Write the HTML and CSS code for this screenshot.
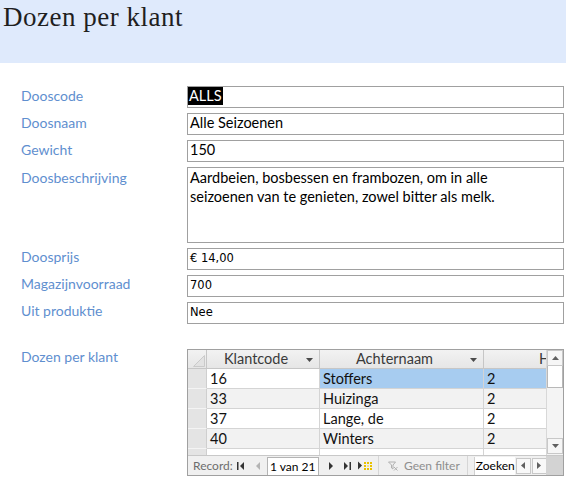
FILE: index.html
```html
<!DOCTYPE html>
<html lang="nl">
<head>
<meta charset="utf-8">
<title>Dozen per klant</title>
<link rel="stylesheet" href="styles.css">
</head>
<body>
<header class="hdr"><h1 class="title">Dozen per klant</h1></header>
<main class="form">
  <label class="lbl">Dooscode</label>
  <div class="fld cal"><span class="sel">ALLS</span></div>
  <label class="lbl">Doosnaam</label>
  <div class="fld cal">Alle Seizoenen</div>
  <label class="lbl">Gewicht</label>
  <div class="fld cal">150</div>
  <label class="lbl">Doosbeschrijving</label>
  <div class="fld cal memo">Aardbeien, bosbessen en frambozen, om in alle<br>seizoenen van te genieten, zowel bitter als melk.</div>
  <label class="lbl">Doosprijs</label>
  <div class="fld tah">€ 14,00</div>
  <label class="lbl">Magazijnvoorraad</label>
  <div class="fld tah">700</div>
  <label class="lbl">Uit produktie</label>
  <div class="fld tah">Nee</div>
  <label class="lbl sublbl">Dozen per klant</label>
  <div class="subform">
    <div class="top">
      <div class="sheet">
        <div class="srow head">
          <div class="c sel-col"><svg class="corner" width="12" height="12" viewBox="0 0 12 12"><path d="M0.5 11.5 L11.5 0.5 L11.5 11.5 Z" fill="#e2e2e2" stroke="#cacaca" stroke-width="1"/></svg></div>
          <div class="c c1 hc"><span class="ht">Klantcode</span><svg class="dd" width="7" height="4" viewBox="0 0 7 4"><path d="M0 0 H7 L3.5 4 Z" fill="#4a4a4a"/></svg></div>
          <div class="c c2 hc"><span class="ht">Achternaam</span><svg class="dd" width="7" height="4" viewBox="0 0 7 4"><path d="M0 0 H7 L3.5 4 Z" fill="#4a4a4a"/></svg></div>
          <div class="c c3 hc h3"><span class="ht">Hoeveelheid</span></div>
        </div>
        <div class="srow r1">
          <div class="c sel-col"></div>
          <div class="c c1 cur">16</div>
          <div class="c c2 hi">Stoffers</div>
          <div class="c c3 hi">2</div>
        </div>
        <div class="srow alt">
          <div class="c sel-col"></div>
          <div class="c c1">33</div>
          <div class="c c2">Huizinga</div>
          <div class="c c3">2</div>
        </div>
        <div class="srow">
          <div class="c sel-col"></div>
          <div class="c c1">37</div>
          <div class="c c2">Lange, de</div>
          <div class="c c3">2</div>
        </div>
        <div class="srow alt">
          <div class="c sel-col"></div>
          <div class="c c1">40</div>
          <div class="c c2">Winters</div>
          <div class="c c3">2</div>
        </div>
        <div class="srow">
          <div class="c sel-col"></div>
          <div class="c c1"></div>
          <div class="c c2"></div>
          <div class="c c3"></div>
        </div>
      </div>
      <div class="vscroll">
        <div class="sbtn"><svg width="7" height="4" viewBox="0 0 7 4"><path d="M0 4 H7 L3.5 0 Z" fill="#606060"/></svg></div>
        <div class="thumb"></div>
        <div class="track"></div>
        <div class="sbtn"><svg width="7" height="4" viewBox="0 0 7 4"><path d="M0 0 H7 L3.5 4 Z" fill="#606060"/></svg></div>
      </div>
    </div>
    <div class="bottom">
      <div class="nav">
        <span class="rec">Record:</span>
        <svg class="ic first" width="7" height="8" viewBox="0 0 7 8"><rect x="0" y="0" width="1.5" height="8" fill="#333"/><path d="M7 0 V8 L3 4 Z" fill="#333"/></svg>
        <svg class="ic prev" width="4" height="8" viewBox="0 0 4 8"><path d="M4 0 V8 L0 4 Z" fill="#b4b4b4"/></svg>
        <div class="recbox">1 van 21</div>
        <svg class="ic next" width="4" height="8" viewBox="0 0 4 8"><path d="M0 0 V8 L4 4 Z" fill="#333"/></svg>
        <svg class="ic last" width="7" height="8" viewBox="0 0 7 8"><path d="M0 0 V8 L4 4 Z" fill="#333"/><rect x="5.5" y="0" width="1.5" height="8" fill="#333"/></svg>
        <svg class="ic new" width="14" height="9" viewBox="0 0 14 9"><path d="M0 0.5 V8.5 L4 4.5 Z" fill="#333"/><g fill="#e9c200"><rect x="6" y="1" width="2" height="2"/><rect x="9" y="1" width="2" height="2"/><rect x="12" y="1" width="2" height="2"/><rect x="6" y="4" width="2" height="2"/><rect x="12" y="4" width="2" height="2"/><rect x="6" y="7" width="2" height="2"/><rect x="9" y="7" width="2" height="2"/><rect x="12" y="7" width="2" height="2"/><rect x="9" y="4" width="2" height="2" fill="#f6e27a"/></g></svg>
        <span class="sep"></span>
        <svg class="ic filt" width="10" height="10" viewBox="0 0 10 10"><path d="M0.5 1 H7.5 L5 4 V8 L3.5 7 V4 Z" fill="none" stroke="#b0b0b0" stroke-width="1"/><path d="M6 6 L9.5 9.5 M9.5 6 L6 9.5" stroke="#b0b0b0" stroke-width="1"/></svg>
        <span class="nofilt">Geen filter</span>
        <span class="sep sep2"></span>
        <div class="search">Zoeken</div>
        <div class="hbtn"><svg width="4" height="7" viewBox="0 0 4 7"><path d="M4 0 V7 L0 3.5 Z" fill="#606060"/></svg></div>
        <div class="hbtn"><svg width="4" height="7" viewBox="0 0 4 7"><path d="M0 0 V7 L4 3.5 Z" fill="#606060"/></svg></div>
      </div>
      <div class="grip"></div>
    </div>
  </div>
</main>
</body>
</html>
```
FILE: styles.css
```css
* { box-sizing: border-box; }
html, body { margin: 0; padding: 0; background: #ffffff; }
body { width: 566px; height: 479px; overflow: hidden; font-family: "Lato", "Liberation Sans", sans-serif; }

.hdr { height: 63px; background: #dfeafc; padding: 0 0 0 3px; }
.title {
  margin: 0;
  padding-top: 2px;
  font-family: "Liberation Serif", serif;
  font-weight: normal;
  font-size: 27px;
  letter-spacing: 0.5px;
  line-height: 30px;
  color: #1f1f1f;
}

.form {
  display: grid;
  grid-template-columns: 166px 377px;
  row-gap: 5px;
  align-items: baseline;
  padding: 23px 0 0 21px;
}

.lbl {
  font-family: "Lato", "Liberation Sans", sans-serif;
  font-size: 14px;
  color: #5f8fcf;
  line-height: 18px;
}

.fld {
  height: 22px;
  border: 1px solid #a0a0a0;
  padding: 0 2px;
  line-height: 18px;
  color: #000;
  white-space: nowrap;
  overflow: hidden;
}
.cal { font-family: "Lato", "Liberation Sans", sans-serif; font-size: 14.5px; }
.tah { font-family: "DejaVu Sans", sans-serif; font-size: 11.5px; line-height: 18px; }
.memo { height: 76px; line-height: 19px; white-space: normal; }

.sel {
  display: inline-block;
  background: #000;
  color: #fff;
  margin-left: -2px;
  padding: 0 1px 0 1px;
  line-height: 18px;
}

.sublbl, .subform { align-self: start; margin-top: 20px; }
.sublbl { line-height: 16px; }
.subform {
  height: 127px;
  border: 1px solid #a0a0a0;
  display: flex;
  flex-direction: column;
  font-family: "Lato", "Liberation Sans", sans-serif;
}
.top { height: 105px; display: flex; }
.sheet { width: 358px; overflow: hidden; }
.srow { display: flex; height: 20px; }
.srow.head { height: 19px; background: linear-gradient(#f2f2f2, #e6e6e6); border-bottom: 1px solid #c6c6c6; }
.c {
  flex: none;
  height: 100%;
  border-right: 1px solid #d4d4d4;
  border-bottom: 1px solid #d4d4d4;
  padding: 0 3px;
  font-size: 14.5px;
  line-height: 19px;
  color: #111;
  white-space: nowrap;
  overflow: hidden;
}
.head .c { border-bottom: none; border-right-color: #c6c6c6; }
.sel-col { width: 19px; background: #e4e4e4; border-right-color: #cfcfcf; border-bottom-color: #f4f4f4; padding: 0; }
.head .sel-col { background: transparent; }
.corner { display: block; margin: 5px 0 0 5px; }
.c1 { width: 113px; }
.c2 { width: 164px; }
.c3 { width: 64px; border-right: none; }
.hc { display: flex; align-items: center; justify-content: center; position: relative; color: #3a3a3a; line-height: 18px; padding-right: 17px; }
.hc .ht { line-height: 18px; }
.dd { position: absolute; right: 6px; top: 8px; }
.h3 { justify-content: flex-start; padding-left: 55px; }
.alt .c { background: #f2f2f2; }
.alt .sel-col { background: #e4e4e4; }
.hi { background: #a7ccf0; }
.cur { background: #fff; }

.vscroll {
  width: 17px;
  border-left: 1px solid #d8d8d8;
  background: #f4f4f4;
  display: flex;
  flex-direction: column;
}
.sbtn {
  height: 16px;
  border: 1px solid #c8c8c8;
  background: #f6f6f6;
  display: flex;
  align-items: center;
  justify-content: center;
}
.thumb { height: 22px; border: 1px solid #b8b8b8; border-top: none; background: #fff; }
.track { flex: 1; }
.vscroll .sbtn:last-child { margin-bottom: 1px; }

.bottom { height: 20px; display: flex; border-top: 1px solid #c8c8c8; }
.nav {
  width: 358px;
  flex: none;
  background: #f0f0f0;
  display: flex;
  align-items: center;
  font-size: 12px;
  color: #6d6d6d;
  white-space: nowrap;
  overflow: hidden;
}
.grip { flex: 1; background: #d3d3d3; }
.rec { margin-left: 5px; width: 44px; flex: none; }
.ic { flex: none; }
.prev { margin-left: 12px; }
.recbox {
  flex: none;
  margin-left: 7px;
  width: 52px;
  height: 19px;
  border: 1px solid #b4b4b4;
  border-bottom: none;
  background: #fff;
  color: #000;
  padding: 0 2px;
  line-height: 18px;
  margin-top: 1px;
}
.next { margin-left: 10px; }
.last { margin-left: 11px; }
.new { margin-left: 7px; }
.sep { flex: none; width: 1px; height: 19px; background: #d6d6d6; margin-left: 6px; }
.filt { margin-left: 9px; }
.nofilt { flex: none; margin-left: 6px; color: #8e8e8e; }
.sep2 { margin-left: 7px; }
.search {
  flex: none;
  margin-left: 6px;
  width: 41px;
  height: 19px;
  margin-top: 1px;
  background: #fff;
  color: #000;
  padding: 0 1px;
  line-height: 18px;
  border-left: 1px solid #d0d0d0;
  overflow: hidden;
}
.hbtn {
  flex: none;
  width: 15px;
  height: 16px;
  margin-left: 1px;
  border: 1px solid #c8c8c8;
  background: #f8f8f8;
  display: flex;
  align-items: center;
  justify-content: center;
}
```
